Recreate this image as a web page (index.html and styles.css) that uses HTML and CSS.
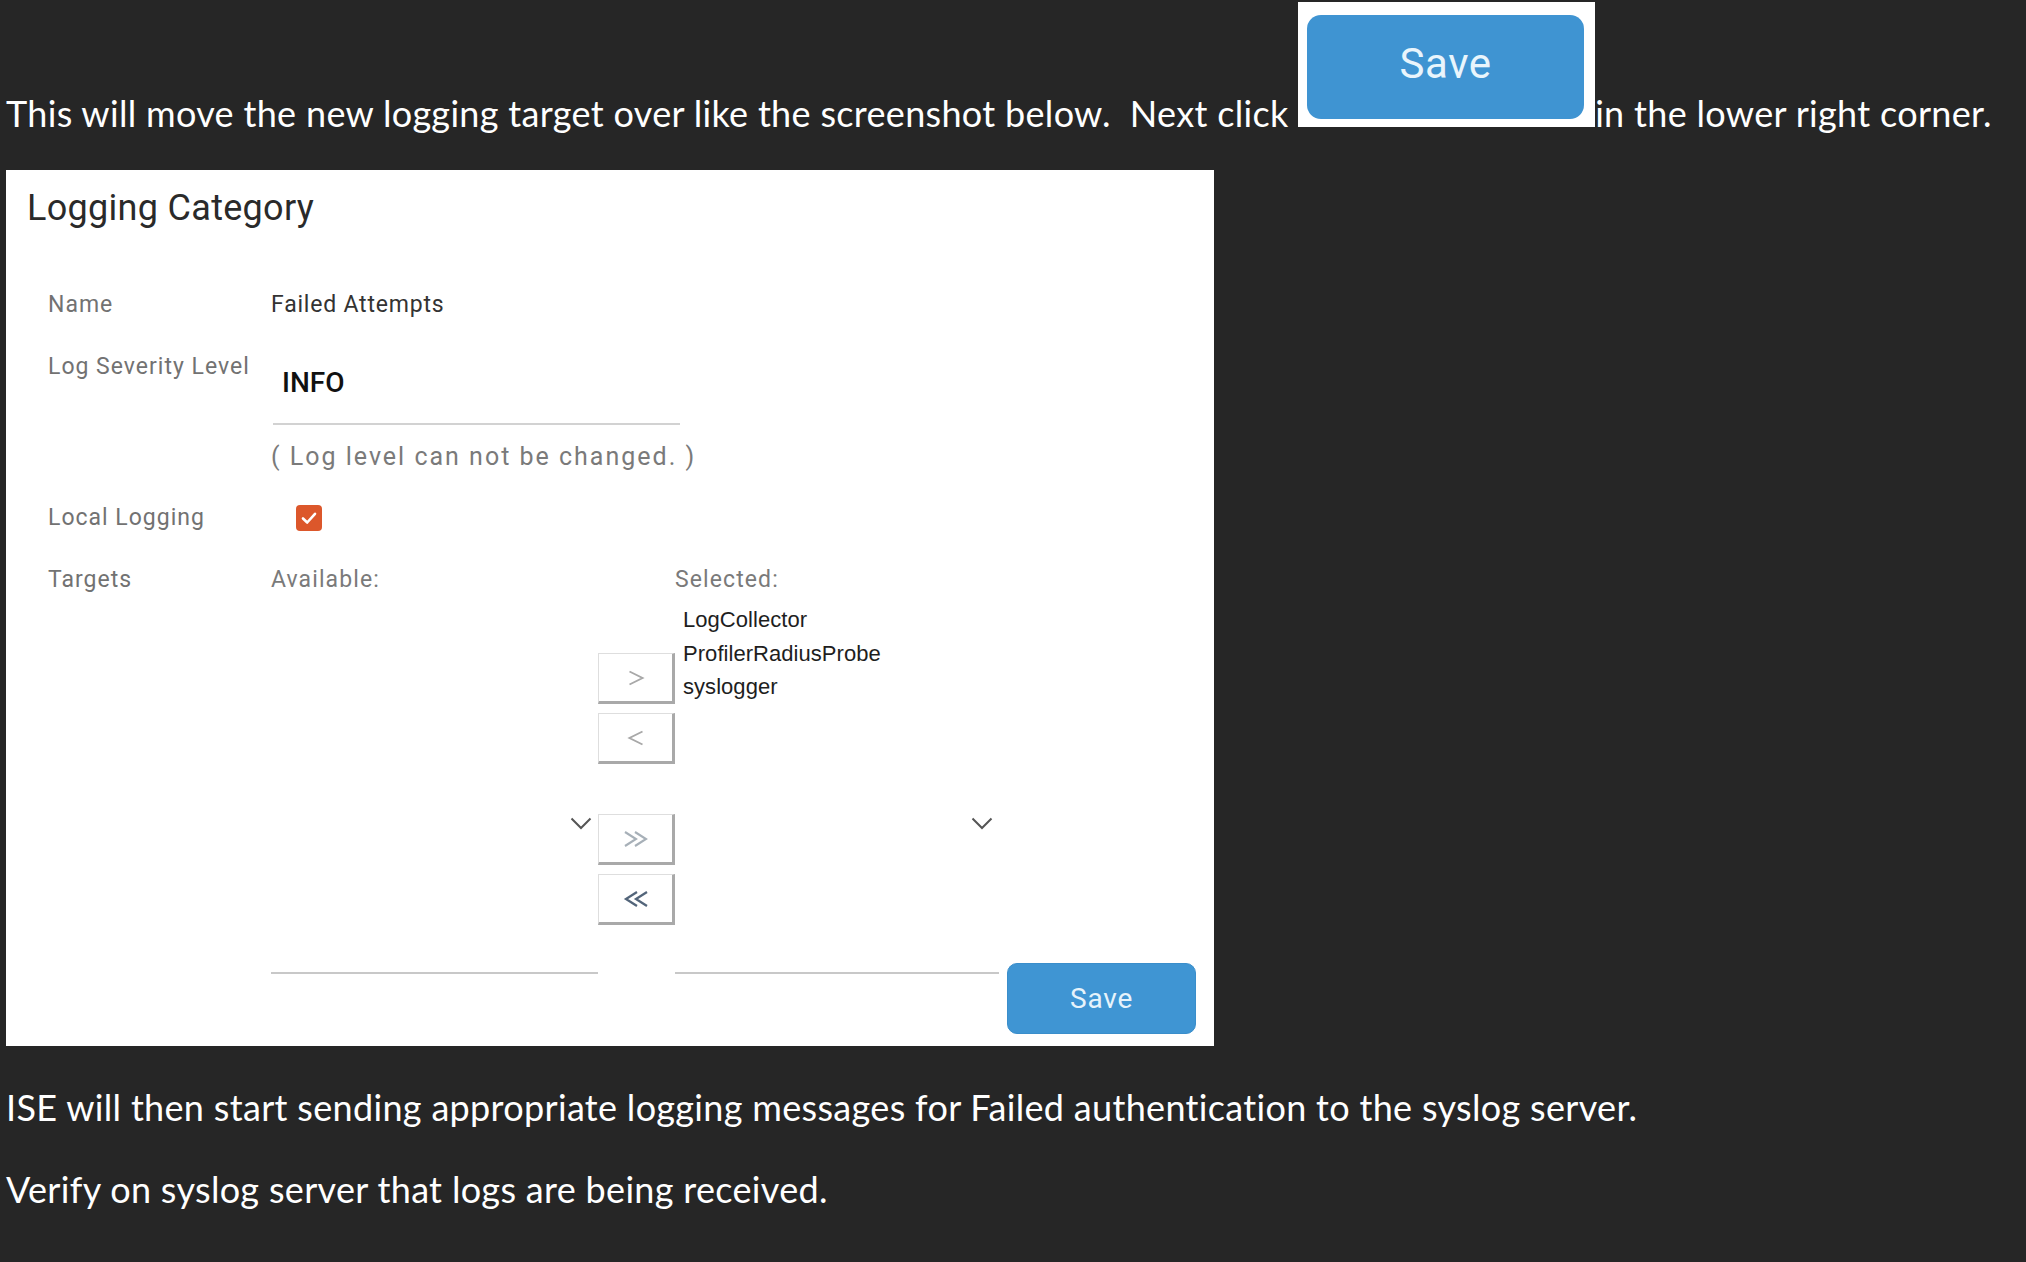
FILE: index.html
```html
<!DOCTYPE html>
<html lang="en">
<head>
<meta charset="utf-8">
<title>Logging Category</title>
<link rel="stylesheet" href="styles.css">
</head>
<body>
<p class="intro">This will move the new logging target over like the screenshot below.&nbsp; Next click <span class="snap"><span class="snap-btn">Save</span></span>in the lower right corner.</p>

<div class="panel">
  <h1 class="title">Logging Category</h1>
  <div class="form">
    <div class="row row-name">
      <div class="label">Name</div>
      <div class="value">Failed Attempts</div>
    </div>
    <div class="row row-sev">
      <div class="label">Log Severity Level</div>
      <div class="input"><span class="input-text">INFO</span></div>
    </div>
    <div class="row row-hint">
      <div class="label"></div>
      <div class="hint">( Log level can not be changed. )</div>
    </div>
    <div class="row row-local">
      <div class="label">Local Logging</div>
      <span class="check">
        <svg width="26" height="26" viewBox="0 0 26 26"><path d="M7 13.5 L11.2 17.5 L19 8.8" fill="none" stroke="#fff" stroke-width="2.6" stroke-linecap="round" stroke-linejoin="round"/></svg>
      </span>
    </div>
    <div class="row row-targets">
      <div class="label">Targets</div>
      <div class="picker">
        <div class="list list-avail">
          <div class="list-head">Available:</div>
          <svg class="chev" width="22" height="13" viewBox="0 0 22 13"><path d="M1.5 1.5 L11 11 L20.5 1.5" fill="none" stroke="#555" stroke-width="2"/></svg>
        </div>
        <div class="movers">
          <button class="mover" type="button"><svg width="20" height="20" viewBox="0 0 20 20"><path d="M3.5 3.5 L16.5 10 L3.5 16.5" fill="none" stroke="#a8a8a8" stroke-width="1.9"/></svg></button>
          <button class="mover" type="button"><svg width="20" height="20" viewBox="0 0 20 20"><path d="M16.5 3.5 L3.5 10 L16.5 16.5" fill="none" stroke="#a8a8a8" stroke-width="1.9"/></svg></button>
          <button class="mover mover-gap" type="button"><svg width="28" height="20" viewBox="0 0 28 20"><path d="M3 3 L14 10 L3 17 M13 3 L24 10 L13 17" fill="none" stroke="#a7b0b8" stroke-width="2.1"/></svg></button>
          <button class="mover" type="button"><svg width="28" height="20" viewBox="0 0 28 20"><path d="M15 3 L4 10 L15 17 M25 3 L14 10 L25 17" fill="none" stroke="#53657a" stroke-width="2.3"/></svg></button>
        </div>
        <div class="list list-sel">
          <div class="list-head">Selected:</div>
          <ul class="items">
            <li>LogCollector</li>
            <li>ProfilerRadiusProbe</li>
            <li>syslogger</li>
          </ul>
          <svg class="chev" width="22" height="13" viewBox="0 0 22 13"><path d="M1.5 1.5 L11 11 L20.5 1.5" fill="none" stroke="#555" stroke-width="2"/></svg>
        </div>
        <button class="save" type="button">Save</button>
      </div>
    </div>
  </div>
</div>

<p class="para para-first">ISE will then start sending appropriate logging messages for Failed authentication to the syslog server.</p>
<p class="para">Verify on syslog server that logs are being received.</p>
</body>
</html>
```

FILE: styles.css
```css
html, body {
  margin: 0;
  padding: 0;
  background: #262626;
}

body {
  font-family: Lato, "Open Sans", sans-serif;
  color: #ffffff;
  width: 2026px;
  min-height: 1262px;
}

.intro {
  margin: 0;
  padding: 2px 0 0 6px;
  font-size: 36px;
  line-height: 1.2;
  letter-spacing: 0.32px;
  white-space: nowrap;
}

.snap {
  display: inline-block;
  vertical-align: baseline;
  overflow: hidden;
  box-sizing: border-box;
  width: 297px;
  height: 125px;
  padding: 13px 11px 8px 9px;
  background: #ffffff;
  letter-spacing: 0;
}

.snap-btn {
  display: flex;
  align-items: center;
  justify-content: center;
  height: 100%;
  box-sizing: border-box;
  padding-bottom: 6px;
  border-radius: 14px;
  background: #3f94d2;
  color: #e9f5fc;
  font-family: Roboto, "Liberation Sans", sans-serif;
  font-size: 42px;
  letter-spacing: 0.6px;
}

.panel {
  box-sizing: border-box;
  width: 1208px;
  height: 876px;
  margin: 35px 0 0 6px;
  padding-top: 16px;
  background: #ffffff;
  font-family: Roboto, "Liberation Sans", sans-serif;
  color: #333333;
}

.title {
  margin: 0 0 0 21px;
  font-size: 36px;
  font-weight: 400;
  line-height: 44px;
  color: #2a2a2a;
  letter-spacing: 0.3px;
}

.form {
  padding-left: 42px;
}

.row {
  display: flex;
  align-items: flex-start;
}

.label {
  flex: 0 0 223px;
  font-size: 23px;
  line-height: 40px;
  color: #727272;
  letter-spacing: 1px;
}

.value {
  font-size: 23px;
  line-height: 40px;
  color: #333333;
  letter-spacing: 0.8px;
}

.row-name { margin-top: 55px; }
.row-sev { margin-top: 22px; }
.row-hint { margin-top: 12px; }
.row-local { margin-top: 21px; }
.row-targets { margin-top: 22px; }

.input {
  box-sizing: border-box;
  width: 407px;
  height: 78px;
  margin-left: 2px;
  padding: 16px 0 0 9px;
  border-bottom: 2px solid #d2d2d2;
}

.input-text {
  display: block;
  font-size: 28px;
  font-weight: 500;
  line-height: 40px;
  color: #111111;
}

.hint {
  font-size: 25px;
  line-height: 40px;
  color: #7a7a7a;
  letter-spacing: 2px;
}

.check {
  display: block;
  width: 26px;
  height: 26px;
  margin: 7px 0 0 25px;
  border-radius: 4px;
  background: #dc572b;
}

.check svg {
  display: block;
}

.picker {
  display: flex;
  align-items: flex-start;
}

.list {
  position: relative;
  box-sizing: border-box;
  height: 414px;
  border-bottom: 2px solid #c8c8c8;
}

.list-avail { width: 327px; }
.list-sel { width: 324px; }

.list-head {
  font-size: 23px;
  line-height: 40px;
  color: #7a7a7a;
  letter-spacing: 1.1px;
}

.chev {
  position: absolute;
  right: 6px;
  top: 257px;
}

.items {
  list-style: none;
  margin: 0;
  padding: 3px 0 0 8px;
  font-family: "Liberation Sans", Arial, sans-serif;
  font-size: 22px;
  line-height: 33.5px;
  color: #1e1e1e;
  letter-spacing: 0.05px;
}

.movers {
  display: flex;
  flex-direction: column;
  gap: 9px;
  width: 77px;
  padding-top: 93px;
}

.mover {
  display: flex;
  align-items: center;
  justify-content: center;
  box-sizing: border-box;
  width: 77px;
  height: 51px;
  padding: 0;
  background: #ffffff;
  border-style: solid;
  border-width: 1px 3px 3px 1px;
  border-color: #dedede #a9a9a9 #a9a9a9 #dedede;
  cursor: pointer;
}

.mover svg {
  display: block;
}

.mover-gap {
  margin-top: 41px;
}

.save {
  box-sizing: border-box;
  width: 189px;
  height: 71px;
  margin: 403px 0 0 8px;
  padding: 0;
  border: 1px solid #3a8ecb;
  border-radius: 10px;
  background: #3f95d3;
  color: #e6f3fb;
  font-family: Roboto, "Liberation Sans", sans-serif;
  font-size: 28px;
  letter-spacing: 0.8px;
  cursor: pointer;
}

.para {
  margin: 39px 0 0;
  padding-left: 6px;
  font-size: 36px;
  line-height: 1.2;
  letter-spacing: 0.32px;
  white-space: nowrap;
}

.para-first {
  margin-top: 40px;
}
```
